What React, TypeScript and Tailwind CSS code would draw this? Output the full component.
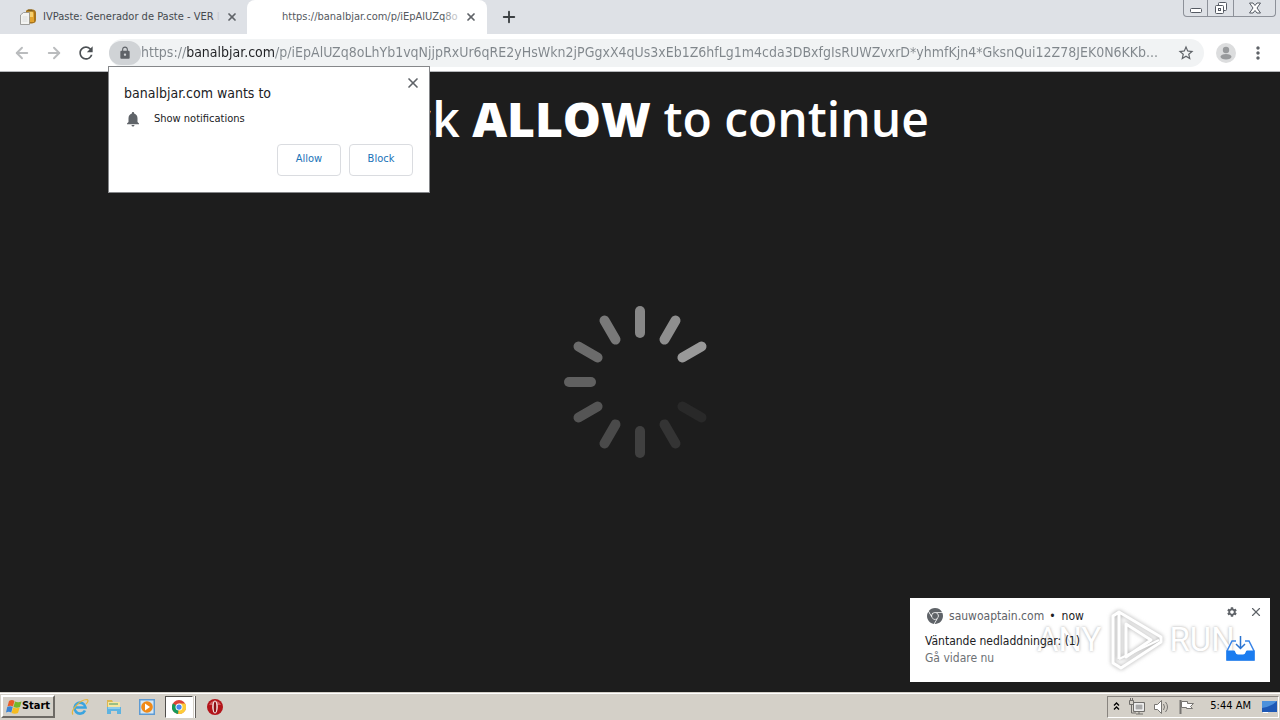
import { ArrowLeft, ArrowRight, Plus, X } from "lucide-react";
import { MdLock, MdMoreVert, MdNotifications, MdRefresh, MdSettings, MdStarBorder } from "react-icons/md";
import { SiGooglechrome } from "react-icons/si";

const url =
  "https://banalbjar.com/p/iEpAlUZq8oLhYb1vqNjjpRxUr6qRE2yHsWkn2jPGgxX4qUs3xEb1Z6hfLg1m4cda3DBxfgIsRUWZvxrD*yhmfKjn4*GksnQui12Z78JEK0N6KKb...";

function PasteIcon() {
  return (
    <svg className="size-4 shrink-0" viewBox="0 0 16 16" aria-hidden="true">
      <path d="M6 2.500Q6 .5 9 .5h4q3 .5 3 3.500v7q0 3-4 3.500H7z" fill="#a8741c" />
      <path d="M7 2h5q2 0 2 2.500V13H7z" fill="#e3a32d" />
      <path d="M8 2.500h4q1 0 1 2V8H8z" fill="#f6cf6e" />
      <path d="M8 .5h4l1 2H7z" fill="#80601f" />
      <path d="M.5 6l3-2.500h6v12h-9z" fill="#f3f3f1" stroke="#8b8b88" strokeWidth=".8" />
      <path d="M2.500 8h5M2.500 10h5M2.500 12h5" stroke="#d3d6d8" strokeWidth=".8" />
    </svg>
  );
}

function Tabs() {
  return (
    <header className="flex h-[34px] shrink-0 items-stretch bg-[#dee1e6] text-[11px]">
      <div className="flex w-[247px] items-center pl-5 pr-[7px]">
        <PasteIcon />
        <a href="#paste" className="ml-[7px] flex-1 whitespace-nowrap text-[#45494e]">
          IVPaste: Generador de Paste - VER <span className="text-[#c9ccd1]">I</span>
        </a>
        <button aria-label="Close IVPaste tab" className="ml-1 grid size-4 place-items-center text-[#5f6368]">
          <X size={12} strokeWidth={3.500} />
        </button>
      </div>
      <div className="flex w-[240px] items-center rounded-t-lg bg-white pl-[35px] pr-2">
        <a href="#current" className="flex-1 whitespace-nowrap text-[#55595e]">
          https://banalbjar.com/p/iEpAlUZq<span className="text-[#9a9da0]">8</span><span className="text-[#c3c5c7]">o</span>
        </a>
        <button aria-label="Close current tab" className="ml-1 grid size-4 place-items-center text-[#5f6368]">
          <X size={12} strokeWidth={3.500} />
        </button>
      </div>
      <button aria-label="New tab" className="ml-[13px] text-[#3c4043]">
        <Plus size={18} strokeWidth={2.500} />
      </button>
      <div className="ml-auto mr-1 flex h-[17px] overflow-hidden rounded-b border border-t-0 border-[#8d9199]">
        <button aria-label="Minimize" className="grid w-6 place-items-center border-r border-[#8d9199]">
          <svg width="14" height="14" viewBox="0 0 14 14"><rect x="1.500" y="7.500" width="11" height="4" rx="1" fill="#fff" stroke="#555a63" /></svg>
        </button>
        <button aria-label="Restore" className="grid w-[26px] place-items-center border-r border-[#8d9199]">
          <svg width="14" height="14" viewBox="0 0 14 14" fill="#fff" stroke="#555a63">
            <rect x="4.500" y="1.500" width="8" height="8" rx="1" />
            <rect x="1.500" y="4.500" width="8" height="8" rx="1" />
            <rect x="4.500" y="7.500" width="2" height="2" />
          </svg>
        </button>
        <button aria-label="Close window" className="grid w-[41px] place-items-center">
          <svg width="14" height="12" viewBox="0 0 14 12"><path d="M1.500 1h3.500l2 2.500L9 1h3.500L9 6l3.500 5H9L7 8.500 5 11H1.500L5 6z" fill="#fff" stroke="#555a63" /></svg>
        </button>
      </div>
    </header>
  );
}

function Permission() {
  const button = "h-8 w-16 rounded border border-[#dadce0] text-[11px] text-[#1a73b8]";
  return (
    <section aria-label="Site permission" className="absolute left-[-1px] top-[27px] z-10 flex w-[322px] flex-col border border-[#85878a] bg-white pb-4 pl-[15px] pr-4 pt-[17px] text-[#202124]">
      <button aria-label="Close permission request" className="absolute right-2 top-2 grid size-4 place-items-center text-[#5f6368]">
        <X size={16} strokeWidth={2.500} />
      </button>
      <h2 className="text-[14px] leading-[18px]">banalbjar.com wants to</h2>
      <p className="mt-2 flex items-center text-[11px] leading-[18px]">
        <MdNotifications className="mr-3 size-[18px] text-[#5f6368]" />
        Show notifications
      </p>
      <div className="mt-4 flex justify-end gap-2">
        <button className={button}>Allow</button>
        <button className={button}>Block</button>
      </div>
    </section>
  );
}

function Toolbar() {
  return (
    <nav className="flex h-[38px] shrink-0 items-center border-b border-[#b5b7ba] bg-white px-[13px] text-[#5f6368]">
      <button aria-label="Back" className="mr-[14px] text-[#babcbe]"><ArrowLeft size={18} strokeWidth={2.500} /></button>
      <button aria-label="Forward" className="mr-[13px] text-[#babcbe]"><ArrowRight size={18} strokeWidth={2.500} /></button>
      <button aria-label="Reload" className="mr-[13px] text-[#4c5054]"><MdRefresh size={20} /></button>
      <div className="relative flex h-7 min-w-0 flex-1 items-center rounded-full bg-[#f1f3f4]">
        <button aria-label="Site information" className="grid h-6 w-8 shrink-0 place-items-center rounded-full bg-[#d0d3d6]">
          <MdLock size={14} />
        </button>
        <input
          aria-label="Address"
          defaultValue={url}
          className="min-w-0 flex-1 bg-[linear-gradient(90deg,#80868b_45px,#202124_45px,#202124_134px,#80868b_134px)] bg-clip-text text-[14px] text-transparent outline-none"
        />
        <button aria-label="Bookmark" className="mr-[9px] ml-4"><MdStarBorder size={18} /></button>
        <Permission />
      </div>
      <button aria-label="Profile" className="ml-3">
        <svg width="20" height="20" viewBox="0 0 20 20"><circle cx="10" cy="10" r="10" fill="#dcddde" /><circle cx="10" cy="7" r="3.200" fill="#989a9c" /><ellipse cx="10" cy="13.800" rx="5.500" ry="2.800" fill="#989a9c" /></svg>
      </button>
      <button aria-label="Menu" className="ml-3 -mr-px"><MdMoreVert size={20} /></button>
    </nav>
  );
}

const spokes = ["#878787", "#8f8f8f", "#999999", "", "#292929", "#343434", "#404040", "#4a4a4a", "#555555", "#606060", "#6b6b6b", "#797979"];

function Spinner() {
  return (
    <svg role="img" aria-label="Loading" width="160" height="160" viewBox="-80 -80 160 160">
      {spokes.map((fill, i) =>
        fill ? <rect key={i} x="-5" y="-76" width="10" height="32" rx="5" fill={fill} transform={`rotate(${i * 30})`} /> : null,
      )}
    </svg>
  );
}

function Toast() {
  return (
    <aside className="absolute bottom-[10px] right-[10px] h-[84px] w-[360px] bg-white px-[15px] py-2 text-[12px] text-[#202124]">
      <div className="pointer-events-none absolute left-[127px] top-3 flex items-center gap-1 font-[Roboto,sans-serif] text-[33px] leading-[60px] text-white [text-shadow:0_0_3px_#888b]">
        <span>ANY</span>
        <svg width="60" height="60" viewBox="0 0 60 60" fill="none" strokeLinejoin="round" className="drop-shadow-[0_0_2px_#888b]" aria-hidden="true">
          <path d="M14 49V2l42 25v5L16 58l-8-5V6l6-4" stroke="#fff" strokeWidth="3" />
          <path d="M21 14l25 16-25 17z" stroke="#fff" strokeWidth="3" />
          <path d="M14 49l40-19" stroke="#fff" strokeWidth="2" />
        </svg>
        <span>RUN</span>
      </div>
      <div className="relative flex h-5 items-center">
        <SiGooglechrome className="mr-[6px] ml-[2px] size-4 text-[#5f6368]" />
        <span className="text-[#5f6368]">sauwoaptain.com</span>
        <span className="ml-[5px]">•</span>
        <span className="ml-[6px]">now</span>
      </div>
      <h3 className="relative mt-[7px] leading-[17px]">Väntande nedladdningar: (1)</h3>
      <p className="relative leading-[17px] text-[#6d7175]">Gå vidare nu</p>
      <button aria-label="Notification settings" className="absolute right-8 top-2 text-[#5f6368]"><MdSettings size={12} /></button>
      <button aria-label="Dismiss notification" className="absolute right-[7px] top-[7px] text-[#5f6368]"><X size={14} strokeWidth={2} /></button>
      <svg className="absolute right-[15px] top-[37px]" width="29" height="26" viewBox="0 0 29 26" aria-hidden="true">
        <path d="M10 6H6L1 16v9h27v-9L23 6h-4" fill="none" stroke="#3b86e8" strokeWidth="1.500" />
        <path d="M.5 15.500H8q1 0 1.500 2t2.500 2h5q2 0 2.500-2t1.500-2h7.500v10H.5z" fill="#1a7cf0" />
        <path d="M14.500 1v12M10 9l4.500 4.500L19 9" fill="none" stroke="#2a73d0" strokeWidth="1.500" />
      </svg>
    </aside>
  );
}

function WindowsFlag() {
  return (
    <svg width="16" height="16" viewBox="0 0 16 16" aria-hidden="true">
      <path d="M3 2q3-2 5.500 0L7 7.500Q4.500 6 1.500 7.500z" fill="#e95c27" />
      <path d="M9 2.500q3 1.500 6.500 0L14 8q-3 1.500-6.500 0z" fill="#75b72b" />
      <path d="M1.200 8q3-1.500 5.500 0L5.300 13.500q-2.500-1.500-5.300 0z" fill="#3a83d4" />
      <path d="M7.200 8.500q3 1.500 6.500 0L12 14q-3 1.500-6.500 0z" fill="#f6bc21" />
    </svg>
  );
}

function Taskbar() {
  return (
    <footer className="flex h-7 shrink-0 items-center border-t border-[#d4d0c8] bg-[#d4d0c8] px-px text-[11px] text-black shadow-[inset_0_1px_0_#fff]">
      <button className="flex h-[23px] w-[54px] items-center justify-center border-2 border-t-white border-l-white border-r-[#6d6a65] border-b-[#6d6a65] text-[11px] font-bold">
        <WindowsFlag />
        Start
      </button>
      <button aria-label="Internet Explorer" className="ml-4">
        <svg width="18" height="18" viewBox="0 0 18 18" fill="none">
          <path d="M14 12.500A5.500 5.500 0 1 1 14.500 9.500H5" stroke="#3ba4df" strokeWidth="2.600" />
          <path d="M2 16.500C-1 13 9 1.500 16 1.500c2.500 1-.5 4-1 4.500" stroke="#e6b63c" strokeWidth="1.200" />
        </svg>
      </button>
      <button aria-label="Explorer" className="ml-4">
        <svg width="18" height="18" viewBox="0 0 18 18"><path d="M2 2h5l1 2h7v7H2z" fill="#dcb650" /><path d="M3 4h12v8H3z" fill="#f6e5a0" /><path d="M4 6h9" stroke="#7cb27a" strokeWidth="1.500" /><path d="M2 9h14v7h-4v-3H6v3H2z" fill="#5eb3e0" /><path d="M3 10h12" stroke="#bfe3f5" /></svg>
      </button>
      <button aria-label="Media Player" className="ml-4">
        <svg width="16" height="16" viewBox="0 0 16 16"><path d="M0 0h16v16H0z" fill="#5e9bd3" /><path d="M1.500 1.500h13v13h-13z" fill="#d5e7f5" /><circle cx="8" cy="8" r="5.800" fill="#f08a18" /><path d="M6 4.500l5 3.500-5 3.500z" fill="#fff" /></svg>
      </button>
      <button aria-label="Chrome" className="ml-[10px] grid h-[22px] w-7 place-items-center border border-white border-t-[#504e4b] border-l-[#504e4b] bg-white">
        <svg width="14" height="14" viewBox="0 0 16 16"><circle cx="8" cy="8" r="8" fill="#dc4437" /><path d="M8 8L1 4a8 8 0 0 0 6 12z" fill="#159b5a" /><path d="M8 8V4h7a8 8 0 0 1-8 12z" fill="#fdcc38" /><circle cx="8" cy="8" r="4" fill="#fff" /><circle cx="8" cy="8" r="3" fill="#4688f1" /></svg>
      </button>
      <span className="ml-px h-[22px] w-[2px] border-r border-[#625f5b] bg-white" />
      <button aria-label="Opera" className="ml-[11px]">
        <svg width="16" height="16" viewBox="0 0 16 16"><circle cx="8" cy="8" r="8" fill="#b3141a" /><path d="M2 6a6.500 6.500 0 0 1 12 0z" fill="#d0595c" /><ellipse cx="8" cy="8" rx="2.800" ry="6.500" fill="#f4e6e4" /><ellipse cx="8" cy="8" rx="1.300" ry="5.500" fill="#8c0f15" /></svg>
      </button>
      <div className="ml-auto flex h-[22px] items-center border border-t-[#88847f] border-l-[#88847f] border-r-white border-b-white pl-1">
        <button aria-label="Show hidden icons">
          <svg width="9" height="11" viewBox="0 0 9 11" fill="none" stroke="#000" strokeWidth="1.300"><path d="M2 4.500l2.500-2.500L7 4.500M2 8.500L4.500 6 7 8.500" /></svg>
        </button>
        <svg className="ml-[7px]" width="18" height="18" viewBox="0 0 18 18" fill="none" stroke="#706e6b"><path d="M5.500 4.500h11v9h-11z" fill="#ddd" /><path d="M7 6h8v6H7z" fill="#aaa" stroke="#fff" /><path d="M8 16h7M11 14v2M3.500 7v8H8M1.500 2.500h4v4h-4zM2.500 0v3M4.500 0v3" /></svg>
        <svg className="ml-[7px]" width="18" height="18" viewBox="0 0 18 18" fill="none" stroke="#777572"><path d="M1.500 6.500h3l4-4v13l-4-4h-3z" fill="#fff" /><path d="M10.500 6q2 3 0 6M12.500 4q4 5 0 10" /></svg>
        <svg className="ml-[7px]" width="18" height="18" viewBox="0 0 18 18" stroke="#777572"><path d="M2.500 2v14" strokeWidth="2" /><path d="M3.500 3.500h6v2h6l-3 3 2 2H8.500v-1h-5z" fill="#fff" /></svg>
        <time className="ml-[14px]">5:44 AM</time>
        <svg className="ml-[10px]" width="17" height="14" viewBox="0 0 17 14"><path d="M1 1h15v11H1z" fill="#1d58b5" /><path d="M1 1h15Q10 7 1 8z" fill="#4c91dc" /><path d="M2 12.500h5" stroke="#fff" /></svg>
      </div>
    </footer>
  );
}

export default function App() {
  return (
    <div className="flex min-h-screen flex-col bg-[#1d1d1d] font-[DejaVu_Sans_Condensed,sans-serif]">
      <Tabs />
      <Toolbar />
      <main className="relative flex flex-1 flex-col items-center overflow-hidden pt-[14px]">
        <h1 className="font-[Open_Sans,sans-serif] text-[48px] font-semibold leading-[66px] text-white">
          Click <strong className="font-extrabold">ALLOW</strong> to continue
        </h1>
        <div className="mt-[150px]"><Spinner /></div>
        <Toast />
      </main>
      <Taskbar />
    </div>
  );
}
